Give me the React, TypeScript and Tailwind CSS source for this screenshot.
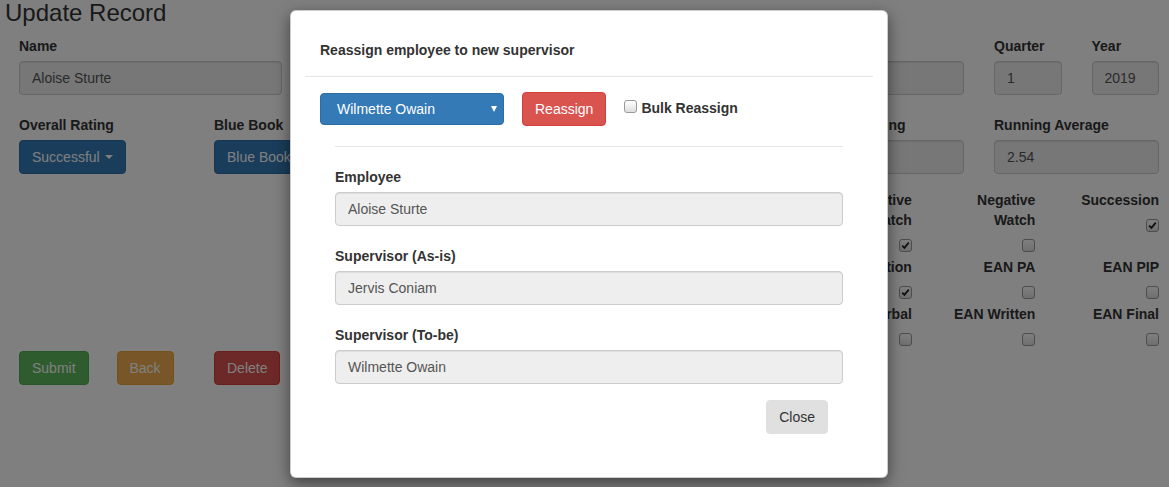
import React from "react";

function Check({ checked = false, className = "" }: { checked?: boolean; className?: string }) {
  return (
    <span
      className={
        "inline-flex items-center justify-center w-[13px] h-[13px] rounded-[3px] border border-[#9a9a9a] bg-gradient-to-b from-[#ffffff] to-[#dedede] " +
        className
      }
    >
      {checked && (
        <svg width="9" height="9" viewBox="0 0 9 9">
          <path d="M1.2 4.6 L3.4 6.8 L7.8 1.6" fill="none" stroke="#222" strokeWidth="1.8" />
        </svg>
      )}
    </span>
  );
}

function Label({ children, className = "" }: { children: React.ReactNode; className?: string }) {
  return <div className={"font-bold text-[14px] leading-[20px] mb-[5px] text-[#333] " + className}>{children}</div>;
}

function Input({ value, className = "" }: { value: string; className?: string }) {
  return (
    <div
      className={
        "h-[34px] rounded-[4px] border border-[#ccc] bg-[#eee] px-[12px] flex items-center text-[14px] text-[#555] shadow-[inset_0_1px_1px_rgba(0,0,0,0.075)] " +
        className
      }
    >
      {value}
    </div>
  );
}

function Btn({ children, className = "" }: { children: React.ReactNode; className?: string }) {
  return (
    <button className={"h-[34px] px-[12px] rounded-[4px] border text-[14px] leading-[20px] inline-flex items-center " + className}>
      {children}
    </button>
  );
}

const checks: [string, boolean][] = [
  ["\u00a0", false],
  ["Positive Watch", true],
  ["Negative Watch", false],
  ["Succession", true],
  ["\u00a0", false],
  ["Probation", true],
  ["EAN PA", false],
  ["EAN PIP", false],
  ["\u00a0", false],
  ["EAN Verbal", false],
  ["EAN Written", false],
  ["EAN Final", false],
];

export default function App() {
  return (
    <div
      className="relative w-[1169px] h-[487px] overflow-hidden bg-white text-[#333] text-[14px]"
      style={{ fontFamily: '"Liberation Sans", Arial, sans-serif' }}
    >
      {/* underlying page */}
      <div className="w-[1170px] ml-[4px]">
        <h3 className="text-[24px] leading-[26px] pl-[1px] text-[#333]">Update Record</h3>
        <div className="grid grid-cols-[repeat(12,97.5px)] mt-[10px]">
          <div className="col-span-3 px-[15px]">
            <Label>Name</Label>
            <Input value="Aloise Sturte" />
          </div>
          <div className="col-span-5 px-[15px]">
            <Label>{"\u00a0"}</Label>
            <Input value="" />
          </div>
          <div className="col-span-2 px-[15px]">
            <Label>{"\u00a0"}</Label>
            <Input value="" />
          </div>
          <div className="col-span-1 px-[15px]">
            <Label>Quarter</Label>
            <Input value="1" />
          </div>
          <div className="col-span-1 px-[15px]">
            <Label>Year</Label>
            <Input value="2019" />
          </div>

          <div className="col-span-2 px-[15px] mt-[20px]">
            <Label>Overall Rating</Label>
            <Btn className="bg-[#337ab7] border-[#2e6da4] text-white">
              Successful
              <span className="ml-[5px] inline-block w-0 h-0 border-x-[4px] border-x-transparent border-t-[4px] border-t-white" />
            </Btn>
          </div>
          <div className="col-span-6 px-[15px] mt-[20px]">
            <Label>Blue Book</Label>
            <Btn className="bg-[#337ab7] border-[#2e6da4] text-white">
              Blue Book
              <span className="ml-[5px] inline-block w-0 h-0 border-x-[4px] border-x-transparent border-t-[4px] border-t-white" />
            </Btn>
          </div>
          <div className="col-span-2 px-[15px] mt-[20px]">
            <Label>Previous Rating</Label>
            <Input value="" />
          </div>
          <div className="col-span-2 px-[15px] mt-[20px]">
            <Label>Running Average</Label>
            <Input value="2.54" />
          </div>

          <div className="col-start-7 col-span-6 flex justify-end mt-[16px]">
            <div className="grid grid-cols-[repeat(4,123.6px)]">
              {checks.map(([name, c], i) => (
                <div key={i} className="px-[15px] text-right pb-[5px]">
                  <div className="font-bold leading-[20px] pb-[5px]">{name}</div>
                  <div className="flex justify-end pt-[4px]">
                    <Check checked={c} />
                  </div>
                </div>
              ))}
            </div>
          </div>

          <div className="col-span-1 px-[15px]">
            <Btn className="bg-[#5cb85c] border-[#4cae4c] text-white">Submit</Btn>
          </div>
          <div className="col-span-1 px-[15px]">
            <Btn className="bg-[#f0ad4e] border-[#eea236] text-white">Back</Btn>
          </div>
          <div className="col-span-1 px-[15px]">
            <Btn className="bg-[#d9534f] border-[#d43f3a] text-white">Delete</Btn>
          </div>
        </div>
      </div>

      {/* backdrop */}
      <div className="absolute inset-0 bg-black/50" />

      {/* modal */}
      <div className="absolute left-[290px] top-[10px] w-[598px] h-[468px] bg-white rounded-[6px] border border-black/20 shadow-[0_5px_15px_rgba(0,0,0,0.5)] px-[14px]">
        <div className="pt-[29px] pb-[16px] pl-[15px] border-b border-[#e5e5e5]">
          <div className="font-bold text-[14px] leading-[20px] text-[#333]">Reassign employee to new supervisor</div>
        </div>
        <div className="flex items-center pt-[15px] pl-[15px]">
          <div className="w-[184px] h-[32px] rounded-[4px] bg-[#337ab7] border border-[#2e6da4] text-white flex items-center pl-[16px] pr-[6px]">
            <span className="flex-1">Wilmette Owain</span>
            <span className="inline-block w-0 h-0 border-x-[3.5px] border-x-transparent border-t-[6px] border-t-white" />
          </div>
          <Btn className="ml-[18px] bg-[#d9534f] border-[#d43f3a] text-white">Reassign</Btn>
          <div className="ml-[18px] flex items-start -mt-[3px]">
            <Check className="mt-[2px]" />
            <span className="ml-[4px] font-bold leading-[20px]">Bulk Reassign</span>
          </div>
        </div>
        <div className="mx-[30px] mt-[20px] border-t border-[#e5e5e5]" />
        <div className="px-[30px] pt-[20px]">
          <Label>Employee</Label>
          <Input value="Aloise Sturte" />
          <Label className="mt-[20px]">Supervisor (As-is)</Label>
          <Input value="Jervis Coniam" />
          <Label className="mt-[20px]">Supervisor (To-be)</Label>
          <Input value="Wilmette Owain" />
          <div className="flex justify-end mt-[16px] pr-[15px]">
            <Btn className="bg-[#e0e0e0] border-[#e0e0e0] text-[#333]">Close</Btn>
          </div>
        </div>
      </div>
    </div>
  );
}
